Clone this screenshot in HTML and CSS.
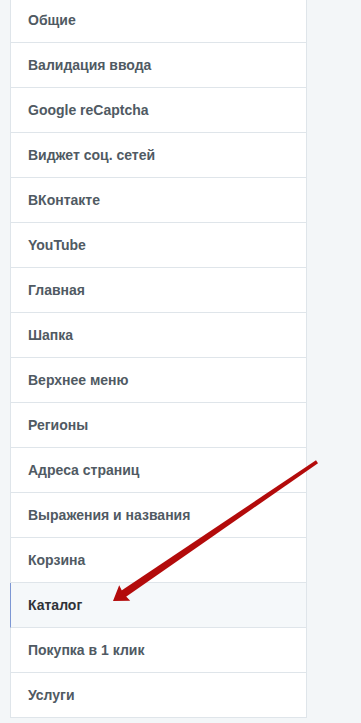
FILE: index.html
```html
<!DOCTYPE html>
<html lang="ru">
<head>
    <meta charset="UTF-8">
    <meta name="viewport" content="width=device-width, initial-scale=1.0">
    <title>Настройки</title>
    <link rel="stylesheet" href="styles.css">
</head>
<body>
    <div class="page">
        <ul class="settings-nav">
            <li class="nav-item">Общие</li>
            <li class="nav-item">Валидация ввода</li>
            <li class="nav-item">Google reCaptcha</li>
            <li class="nav-item">Виджет соц. сетей</li>
            <li class="nav-item">ВКонтакте</li>
            <li class="nav-item">YouTube</li>
            <li class="nav-item">Главная</li>
            <li class="nav-item">Шапка</li>
            <li class="nav-item">Верхнее меню</li>
            <li class="nav-item">Регионы</li>
            <li class="nav-item">Адреса страниц</li>
            <li class="nav-item">Выражения и названия</li>
            <li class="nav-item">Корзина</li>
            <li class="nav-item active">Каталог</li>
            <li class="nav-item">Покупка в 1 клик</li>
            <li class="nav-item">Услуги</li>
        </ul>

        <!-- annotation arrow pointing at the active item -->
        <svg class="pointer" width="361" height="723" viewBox="0 0 361 723">
            <polygon points="318,465.2 316,462.3 120.8,593.1 125,599.4" fill="#b30b0b"/>
            <polygon points="113,603 119.2,587.3 123.3,595.4 130.2,602.7" fill="#b30b0b"/>
        </svg>
    </div>
</body>
</html>
```

FILE: styles.css
```css
body {
    margin: 0;
    background: #f3f6f8;
    font-family: "Liberation Sans", Arial, sans-serif;
    overflow: hidden;
}

.page {
    position: relative;
    height: 723px;
    padding-left: 10px;
}

.settings-nav {
    list-style: none;
    margin: -2px 0 0 0;
    padding: 0;
    width: 296px;
    background: #fff;
    border-right: 1px solid #dfe5ea;
}

.nav-item {
    height: 44px;
    line-height: 44px;
    padding-left: 17px;
    border-left: 1px solid #dfe5ea;
    border-bottom: 1px solid #dfe5ea;
    font-size: 14px;
    font-weight: bold;
    color: #505a63;
}

.nav-item.active {
    background: #f5f8fa;
    border-left-color: #7d97d4;
    color: #2f3338;
}

.pointer {
    position: absolute;
    top: 0;
    left: 0;
    pointer-events: none;
}
```
